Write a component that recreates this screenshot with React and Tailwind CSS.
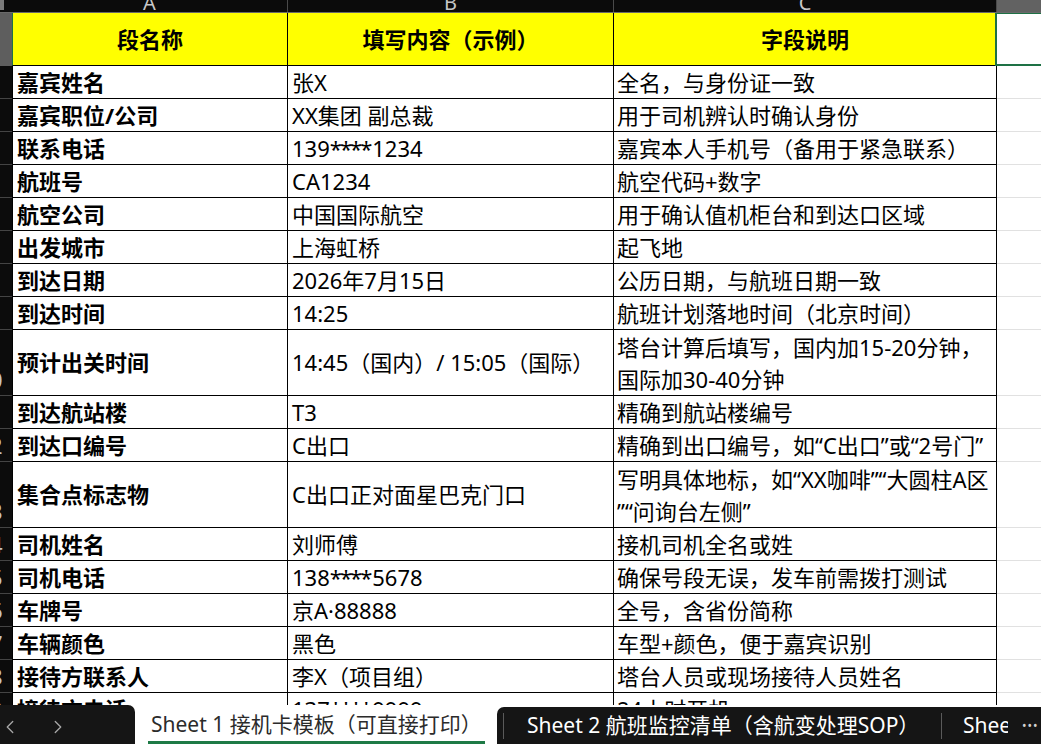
import { ChevronLeft, ChevronRight } from 'lucide-react'

const rows = [
  { no: 2, name: '嘉宾姓名', value: '张X', note: ['全名，与身份证一致'] },
  { no: 3, name: '嘉宾职位/公司', value: 'XX集团 副总裁', note: ['用于司机辨认时确认身份'] },
  { no: 4, name: '联系电话', value: '139****1234', note: ['嘉宾本人手机号（备用于紧急联系）'] },
  { no: 5, name: '航班号', value: 'CA1234', note: ['航空代码+数字'] },
  { no: 6, name: '航空公司', value: '中国国际航空', note: ['用于确认值机柜台和到达口区域'] },
  { no: 7, name: '出发城市', value: '上海虹桥', note: ['起飞地'] },
  { no: 8, name: '到达日期', value: '2026年7月15日', note: ['公历日期，与航班日期一致'] },
  { no: 9, name: '到达时间', value: '14:25', note: ['航班计划落地时间（北京时间）'] },
  { no: 10, name: '预计出关时间', value: '14:45（国内）/ 15:05（国际）', note: ['塔台计算后填写，国内加15-20分钟，', '国际加30-40分钟'], tall: true },
  { no: 11, name: '到达航站楼', value: 'T3', note: ['精确到航站楼编号'] },
  { no: 12, name: '到达口编号', value: 'C出口', note: ['精确到出口编号，如“C出口”或“2号门”'] },
  { no: 13, name: '集合点标志物', value: 'C出口正对面星巴克门口', note: ['写明具体地标，如“XX咖啡”“大圆柱A区', '”“问询台左侧”'], tall: true },
  { no: 14, name: '司机姓名', value: '刘师傅', note: ['接机司机全名或姓'] },
  { no: 15, name: '司机电话', value: '138****5678', note: ['确保号段无误，发车前需拨打测试'] },
  { no: 16, name: '车牌号', value: '京A·88888', note: ['全号，含省份简称'] },
  { no: 17, name: '车辆颜色', value: '黑色', note: ['车型+颜色，便于嘉宾识别'] },
  { no: 18, name: '接待方联系人', value: '李X（项目组）', note: ['塔台人员或现场接待人员姓名'] },
  { no: 19, name: '接待方电话', value: '137****9999', note: ['24小时开机'] },
]

function RowHead({ no, selected }) {
  return (
    <div className={`w-[12px] shrink-0 overflow-hidden border-b ${selected ? 'bg-[#5e5e5e] border-[#5e5e5e]' : 'bg-[#0c0c0c] border-[#444]'}`}>
      <div className="w-[40px] ml-[-30px] h-full flex items-end justify-center pb-[3px] text-[22px] leading-[26px] text-[#c4c4c4]">
        {no}
      </div>
    </div>
  )
}

function ColHead({ label, className }) {
  return (
    <div className={`h-full overflow-hidden flex items-end justify-center ${className}`}>
      <span className="text-[20px] leading-[20px] mb-[-1px] text-[#c8c8c8]">{label}</span>
    </div>
  )
}

// asterisks in phone numbers sit a little tighter than the digits
function Value({ text }) {
  const parts = text.split(/(\*+)/)
  return parts.map((p, i) =>
    p.startsWith('*') ? (
      <span key={i} className="tracking-[-2px] mr-[2px]">{p}</span>
    ) : (
      <span key={i}>{p}</span>
    )
  )
}

export default function App() {
  return (
    <div className="w-[1041px] h-[744px] overflow-hidden flex flex-col bg-white font-['Noto_Sans','Noto_Sans_CJK_SC',sans-serif] text-black">
      {/* column letters */}
      <div className="h-[13px] shrink-0 flex bg-[#0b0b0b] border-b border-[#6a6a6a]">
        <div className="w-[12px] shrink-0 h-full">
          <div className="w-[4px] h-[10px] bg-[#7a7a7a]" />
        </div>
        <ColHead label="A" className="w-[276px] border-r border-[#4a4a4a]" />
        <ColHead label="B" className="w-[326px] border-r border-[#4a4a4a]" />
        <ColHead label="C" className="w-[383px] border-r border-[#4a4a4a]" />
        <div className="flex-1 h-full bg-[#626262]" />
      </div>

      <div className="flex-1 overflow-hidden">
        {/* header row */}
        <div className="h-[53px] flex">
          <RowHead no={1} selected />
          <div className="w-[276px] shrink-0 flex items-center justify-center bg-[#ffff00] border-l border-l-[#1e7145] border-r border-b border-black text-[22px] font-bold">
            段名称
          </div>
          <div className="w-[326px] shrink-0 flex items-center justify-center bg-[#ffff00] border-r border-b border-black text-[22px] font-bold">
            填写内容（示例）
          </div>
          <div className="w-[383px] shrink-0 flex items-center justify-center bg-[#ffff00] border-r border-b border-black text-[22px] font-bold">
            字段说明
          </div>
          <div className="flex-1 relative border-b border-[#e1e1e1]">
            <div className="absolute left-[-2px] top-[-1px] right-[-4px] bottom-[-1px] border-2 border-[#1e7145]" />
          </div>
        </div>

        {rows.map((r) => (
          <div key={r.no} className={`flex ${r.tall ? 'h-[66px]' : 'h-[33px]'}`}>
            <RowHead no={r.no} />
            <div className="w-[276px] shrink-0 flex items-center pl-[4px] border-l border-r border-b border-black text-[22px] font-bold whitespace-nowrap overflow-hidden">
              {r.name}
            </div>
            <div className="w-[326px] shrink-0 flex items-center pl-[4px] border-r border-b border-black text-[22px] whitespace-nowrap overflow-hidden">
              <Value text={r.value} />
            </div>
            <div className="w-[383px] shrink-0 flex flex-col justify-center pl-[3px] border-r border-b border-black text-[22px] leading-[32px] whitespace-nowrap overflow-hidden">
              {r.note.map((line) => (
                <span key={line}>{line}</span>
              ))}
            </div>
            <div className="flex-1 border-b border-[#e1e1e1]" />
          </div>
        ))}
      </div>

      {/* sheet tabs */}
      <div className="h-[39px] shrink-0 flex bg-white">
        <div className="w-[135px] shrink-0 h-full bg-[#151515] rounded-tr-[7px] flex items-center pt-[5px] text-[#a8a8a8]">
          <ChevronLeft size={22} strokeWidth={1.4} className="ml-[-1px]" />
          <ChevronRight size={22} strokeWidth={1.4} className="ml-[26px]" />
        </div>
        <div className="w-[362px] shrink-0 h-full flex flex-col pl-[13px] pr-[12px]">
          <div className="flex-1 flex items-center pt-[4px] pl-[3px] text-[21px] text-[#2b2b2b] whitespace-nowrap">
            Sheet 1 接机卡模板（可直接打印）
          </div>
          <div className="h-[4px] bg-[#1e7a46]" />
        </div>
        <div className="flex-1 mt-[2px] bg-[#151515] rounded-tl-[7px] flex items-center text-[21px] text-white whitespace-nowrap overflow-hidden">
          <div className="w-px h-[26px] ml-[6px] bg-[#5a5a5a]" />
          <div className="w-[437px] shrink-0 pl-[23px]">Sheet 2 航班监控清单（含航变处理SOP）</div>
          <div className="w-px h-[26px] bg-[#5a5a5a]" />
          <div className="w-[45px] ml-[21px] overflow-hidden">Sheet 3</div>
          <div className="ml-[14px] text-[12px] tracking-[1px] text-[#d0d0d0]">•••</div>
        </div>
      </div>
    </div>
  )
}
